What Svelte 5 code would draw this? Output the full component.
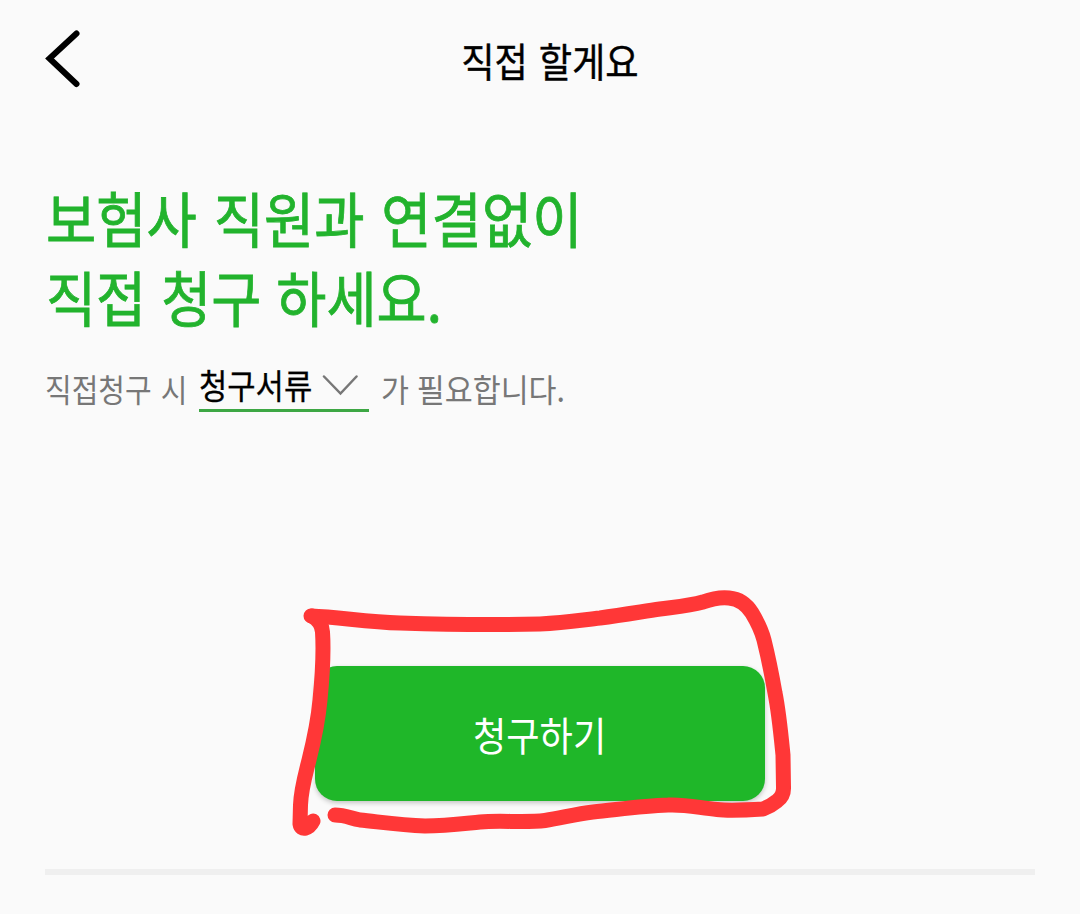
<script lang="ts">
  const title = "직접 할게요";
  const headline = ["보험사 직원과 연결없이", "직접 청구 하세요."];
</script>

<main>
  <header>
    <button class="back" aria-label="뒤로">
      <svg width="40" height="62" viewBox="0 0 40 62">
        <path d="M31.5 5.5 L4.5 30.5 L31.5 56" />
      </svg>
    </button>
    <h1><span class="narrow">{title}</span></h1>
  </header>

  <section class="intro">
    <h2>
      {#each headline as line}
        <span class="line narrow">{line}</span>
      {/each}
    </h2>
    <div class="notice">
      <span class="before"><span class="narrow">직접청구 시</span></span>
      <button class="papers">
        <span class="narrow">청구서류</span>
        <svg width="36" height="24" viewBox="0 0 36 24">
          <path d="M2 2.5 L18.5 19.5 L34.5 2.5" />
        </svg>
      </button>
      <span class="after"><span class="narrow">가 필요합니다.</span></span>
    </div>
  </section>

  <div class="action">
    <button class="claim"><span class="narrow">청구하기</span></button>
    <svg class="marker" width="520" height="260" viewBox="280 580 520 260">
      <path
        d="M311 616 C340 617 365 622 400 623 C445 624.5 500 625 540 624 C565 623 582 620 600 618 C622 615 640 612 660 609 C675 607 689 606 703 602 C714 598 720 597 729 598 C740 599 747 605 752 613 C758 623 762 632 764 640 C768 656 772 676 775 693 C779 713 781 735 783 755 L783.5 787 Q784 796 777 801 Q771 806 763 809 C747 810 730 811 717 809.5 C700 808 685 804 668 805 C640 806 615 810 593 812 C575 814 562 818 545 820.5 C525 823 500 820 480 822 C460 824 445 826 425 826 C400 825 380 822 360 820 C350 818 345 815 335 815"
      />
      <path
        d="M312 616 C319 620 322 625 322.5 632 C324 655 322 680 320 700 C318 722 314 740 309 760 C304 780 301 790 300.5 805 L300 824 C301 831 309 829 313 821"
      />
    </svg>
  </div>

  <hr />
</main>

<style>
  :global(body) {
    margin: 0;
    background: #fafafa;
  }

  main {
    box-sizing: border-box;
    height: 914px;
    padding: 0 45px;
    overflow: hidden;
    font-family: "Noto Sans CJK KR", sans-serif;
    color: #000;
  }

  h1,
  h2 {
    margin: 0;
    font-weight: 400;
  }

  button {
    border: none;
    padding: 0;
    background: none;
    color: inherit;
    font-family: inherit;
  }

  svg {
    display: block;
    fill: none;
  }

  .narrow {
    display: inline-block;
    transform: scaleX(0.905);
    white-space: nowrap;
  }

  header {
    display: grid;
    grid-template-columns: 40px 1fr 20px;
    align-items: center;
    height: 118px;
  }

  .back path {
    stroke: #000;
    stroke-width: 6;
    stroke-linecap: round;
    stroke-linejoin: miter;
  }

  h1 {
    padding-top: 2px;
    font-size: 40px;
    line-height: 60px;
    text-align: center;
    word-spacing: 3px;
    -webkit-text-stroke: 0.4px #000;
  }

  .intro {
    padding-top: 59px;
  }

  h2 {
    padding-left: 1px;
    color: #22b32d;
    font-size: 60px;
    line-height: 79px;
    word-spacing: 5px;
    -webkit-text-stroke: 0.8px #22b32d;
  }

  .line {
    display: block;
    transform-origin: left;
  }

  .line:first-child {
    transform: scaleX(0.911);
  }

  .line:last-child {
    transform: scaleX(0.908);
    word-spacing: 3px;
  }

  .notice {
    display: flex;
    align-items: flex-start;
    margin-top: 31px;
    color: #777;
    font-size: 32px;
    line-height: 44px;
  }

  .notice .narrow {
    transform-origin: left;
  }

  .before {
    width: 154px;
    word-spacing: 3px;
  }

  .papers {
    display: flex;
    justify-content: space-between;
    box-sizing: border-box;
    width: 170px;
    height: 46px;
    padding-right: 11px;
    border-bottom: 3px solid #3da744;
    color: #000;
    font-size: 34px;
    line-height: 38px;
    -webkit-text-stroke: 0.3px #000;
  }

  .papers .narrow {
    width: 114px;
  }

  .papers svg {
    margin-top: 8px;
  }

  .papers path {
    stroke: #777;
    stroke-width: 2.5;
    stroke-linecap: round;
  }

  .after {
    margin-left: 12px;
    word-spacing: 1px;
  }

  .after .narrow {
    transform: scaleX(0.95);
  }

  .action {
    position: relative;
    display: flex;
    justify-content: center;
    margin-top: 254px;
  }

  .claim {
    width: 450px;
    height: 135px;
    border-radius: 22px;
    background: #1fb729;
    box-shadow: 0 2px 5px rgba(0, 0, 0, 0.22);
    color: #fff;
    font-size: 40px;
  }

  .marker {
    position: absolute;
    top: -86px;
    left: 235px;
  }

  .marker path {
    stroke: #ff3737;
    stroke-width: 15;
    stroke-linecap: round;
    stroke-linejoin: round;
  }

  hr {
    height: 6px;
    margin: 68px 0 0;
    border: none;
    background: #efefef;
  }
</style>
